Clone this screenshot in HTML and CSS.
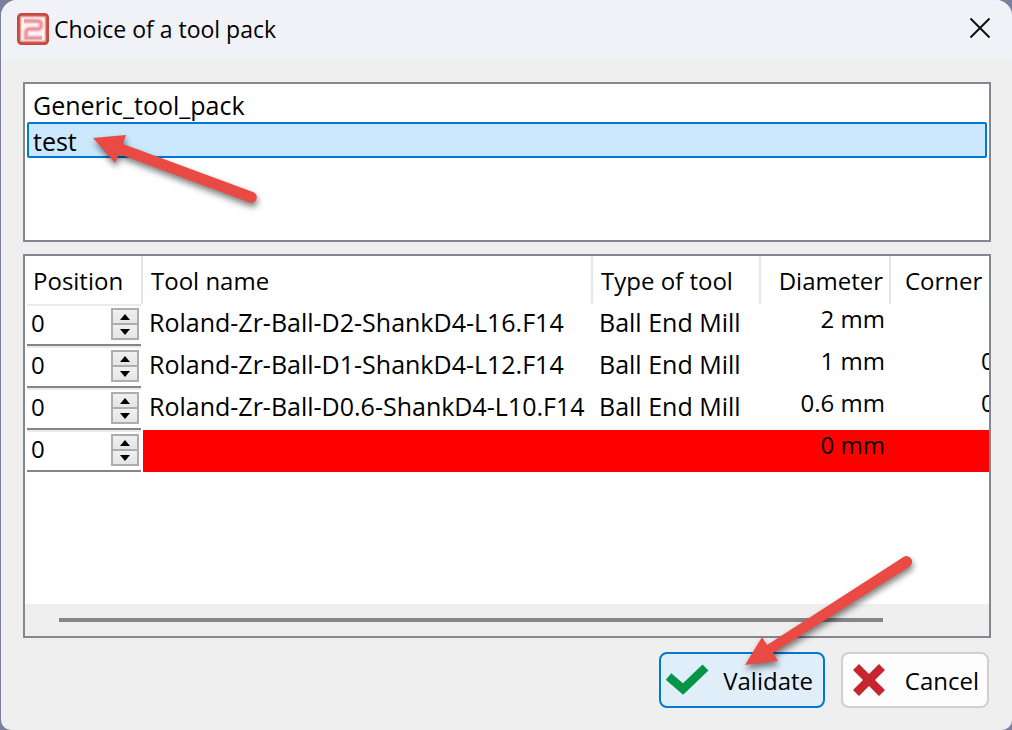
FILE: index.html
```html
<!DOCTYPE html>
<html lang="en">
<head>
  <meta charset="UTF-8">
  <meta name="viewport" content="width=device-width, initial-scale=1.0">
  <title>Choice of a tool pack</title>
  <link rel="stylesheet" href="styles.css">
</head>
<body>
  <div class="dialog">
    <header class="title-bar">
      <svg class="app-icon" width="32" height="32" viewBox="0 0 32 32" aria-hidden="true">
        <rect x="1.5" y="1.5" width="29" height="29" rx="3" fill="#fdf3f3" stroke="#c9493f" stroke-width="3"/>
        <rect x="3.5" y="3.5" width="25" height="25" rx="2" fill="none" stroke="#e39b95" stroke-width="1.500"/>
        <path d="M7 8H20Q24 8 24 11V13Q24 16 20 16H13Q9 16 9 20V25H25" fill="none" stroke="#f9d3d8" stroke-width="6"/>
        <path d="M7 8H20Q24 8 24 11V13Q24 16 20 16H13Q9 16 9 20V25H25" fill="none" stroke="#ee93a2" stroke-width="3"/>
      </svg>
      <h1 class="title">Choice of a tool pack</h1>
      <button class="close-button" type="button" aria-label="Close">
        <svg width="20" height="20" viewBox="0 0 20 20"><path d="M0.5 0.5L19.5 19.5M19.5 0.5L0.5 19.5" stroke="#111" stroke-width="2"/></svg>
      </button>
    </header>

    <form class="content">
      <!-- Tool packs -->
      <select class="pack-list" size="4" aria-label="Tool packs">
        <option>Generic_tool_pack</option>
        <option selected>test</option>
      </select>

      <!-- Tools of the selected pack -->
      <div class="tool-panel">
        <div class="tool-view">
          <table class="tool-table">
            <colgroup>
              <col class="col-position">
              <col class="col-name">
              <col class="col-type">
              <col class="col-diameter">
              <col class="col-corner">
            </colgroup>
            <thead>
              <tr>
                <th>Position</th>
                <th>Tool name</th>
                <th>Type of tool</th>
                <th class="number">Diameter</th>
                <th class="corner">Corner</th>
              </tr>
            </thead>
            <tbody>
              <tr>
                <td class="position">
                  <div class="spinner">
                    <input type="number" value="0" aria-label="Position of tool 1">
                    <div class="spin-buttons">
                      <button class="up" type="button" aria-label="Increase"></button>
                      <button class="down" type="button" aria-label="Decrease"></button>
                    </div>
                  </div>
                </td>
                <td>Roland-Zr-Ball-D2-ShankD4-L16.F14</td>
                <td>Ball End Mill</td>
                <td class="number">2 mm</td>
                <td class="radius"></td>
              </tr>
              <tr>
                <td class="position">
                  <div class="spinner">
                    <input type="number" value="0" aria-label="Position of tool 2">
                    <div class="spin-buttons">
                      <button class="up" type="button" aria-label="Increase"></button>
                      <button class="down" type="button" aria-label="Decrease"></button>
                    </div>
                  </div>
                </td>
                <td>Roland-Zr-Ball-D1-ShankD4-L12.F14</td>
                <td>Ball End Mill</td>
                <td class="number">1 mm</td>
                <td class="radius">0</td>
              </tr>
              <tr>
                <td class="position">
                  <div class="spinner">
                    <input type="number" value="0" aria-label="Position of tool 3">
                    <div class="spin-buttons">
                      <button class="up" type="button" aria-label="Increase"></button>
                      <button class="down" type="button" aria-label="Decrease"></button>
                    </div>
                  </div>
                </td>
                <td>Roland-Zr-Ball-D0.6-ShankD4-L10.F14</td>
                <td>Ball End Mill</td>
                <td class="number">0.6 mm</td>
                <td class="radius">0</td>
              </tr>
              <tr class="invalid">
                <td class="position">
                  <div class="spinner">
                    <input type="number" value="0" aria-label="Position of tool 4">
                    <div class="spin-buttons">
                      <button class="up" type="button" aria-label="Increase"></button>
                      <button class="down" type="button" aria-label="Decrease"></button>
                    </div>
                  </div>
                </td>
                <td></td>
                <td></td>
                <td class="number">0 mm</td>
                <td class="radius"></td>
              </tr>
            </tbody>
          </table>
        </div>
        <div class="scroll-track"><div class="scroll-thumb"></div></div>
      </div>

      <!-- Actions -->
      <div class="actions">
        <button class="action-button validate" type="submit">
          <svg width="44" height="32" viewBox="0 0 44 32" aria-hidden="true"><path d="M2.500 12.500L17 25L39.500 3.500" fill="none" stroke="#069546" stroke-width="8.500"/></svg>
          <span>Validate</span>
        </button>
        <button class="action-button cancel" type="button">
          <svg width="32" height="32" viewBox="0 0 32 32" aria-hidden="true"><path d="M3 3L29 29M29 3L3 29" stroke="#c6262e" stroke-width="8.500"/></svg>
          <span>Cancel</span>
        </button>
      </div>
    </form>

    <svg class="arrow arrow-pack" width="180" height="84" viewBox="0 0 180 84" aria-hidden="true">
      <path d="M13 8L46 5L43 14L173 62A5.300 5.300 0 0 1 169.500 72.500L39 24L35 33Z" fill="#e94b44"/>
    </svg>
    <svg class="arrow arrow-validate" width="180" height="124" viewBox="0 0 180 124" aria-hidden="true">
      <path d="M5 115L22 87L27 95L163.500 7A5.500 5.500 0 0 1 169.500 16.500L33 103L38 111Z" fill="#e94b44"/>
    </svg>
  </div>
</body>
</html>
```
FILE: styles.css
```css
* {
  box-sizing: border-box;
}

body, html {
  margin: 0;
  padding: 0;
}

body {
  background-color: #7b7e9c;
  font-family: "Open Sans", "Noto Sans", sans-serif;
  font-size: 24px;
  color: #000;
}

button, input, select {
  font: inherit;
  color: inherit;
}

.dialog {
  position: relative;
  display: flex;
  flex-direction: column;
  min-height: 100vh;
  margin-left: 1px;
  background-color: #efefef;
  border-radius: 16px 16px 10px 10px;
  overflow: hidden;
}

/* Title bar */
.title-bar {
  display: flex;
  align-items: center;
  height: 60px;
  padding: 0 16px 2px;
  background-color: #f1f2f8;
}

.title {
  flex: 1;
  margin: 0 0 0 5px;
  font-size: 23px;
  font-weight: normal;
}

.close-button {
  display: flex;
  padding: 4px 6px 6px;
  background: none;
  border: none;
}

/* Content */
.content {
  flex: 1;
  display: flex;
  flex-direction: column;
  gap: 12px;
  padding: 22px 21px 22px 22px;
}

.pack-list {
  width: 100%;
  height: 160px;
  padding: 2px;
  background-color: #fff;
  border: 2px solid #828790;
  border-radius: 0;
  outline: none;
  overflow: hidden;
  font-size: 25px;
}

.pack-list option {
  height: 36px;
  min-height: 36px;
  padding: 0 4px;
  border: 2px solid transparent;
  line-height: 28px;
}

.pack-list option:checked {
  background: linear-gradient(#cce8ff, #cce8ff);
  border-color: #0078d7;
  border-radius: 2px;
  color: #000;
}

.tool-panel {
  flex: 1;
  display: flex;
  flex-direction: column;
  border: 2px solid #828790;
  background-color: #fff;
}

.tool-view {
  flex: 1;
  overflow: hidden;
}

.tool-table {
  width: 100%;
  table-layout: fixed;
  border-collapse: separate;
  border-spacing: 0;
  white-space: nowrap;
}

.col-position {
  width: 118px;
}

.col-name {
  width: 450px;
}

.col-type {
  width: 168px;
}

.col-diameter {
  width: 130px;
}

.tool-table th {
  height: 48px;
  padding: 0 6px 0 8px;
  border-right: 2px solid #e5e5e5;
  font-weight: normal;
  text-align: left;
}

.tool-table th.corner {
  padding: 0 0 0 14px;
  border-right: none;
}

.tool-table td {
  height: 42px;
  padding: 0 6px;
  font-size: 25px;
  line-height: 36px;
  vertical-align: top;
  overflow: hidden;
}

.tool-table .number {
  text-align: right;
}

.tool-table td.number,
.tool-table td.radius {
  font-size: 24px;
  line-height: 30px;
}

.tool-table td.radius {
  padding: 0 0 0 90px;
}

.tool-table td.position {
  padding: 0 2px;
  background-color: #fff;
}

.invalid {
  background-color: #f00;
}

.spinner {
  display: flex;
  align-items: center;
  justify-content: space-between;
  height: 42px;
  padding: 0 2px 2px 4px;
  border-top: 2px solid #ebebeb;
  border-bottom: 2px solid #858585;
}

.spinner input {
  width: 60px;
  height: 32px;
  padding: 0 0 2px;
  background: none;
  border: none;
  font-size: 24px;
  appearance: textfield;
}

.spinner input::-webkit-inner-spin-button {
  display: none;
}

.spin-buttons {
  display: flex;
  flex-direction: column;
  width: 28px;
  height: 32px;
  border: 2px solid #adadad;
}

.spin-buttons button {
  flex: 1;
  display: flex;
  align-items: center;
  justify-content: center;
  padding: 0;
  background: linear-gradient(#f0f0f0, #e5e5e5);
  border: none;
}

.spin-buttons .down {
  border-top: 2px solid #adadad;
}

.spin-buttons button::before {
  content: "";
  border: 5px solid transparent;
}

.spin-buttons .up::before {
  border-top: none;
  border-bottom: 6px solid #000;
}

.spin-buttons .down::before {
  border-bottom: none;
  border-top: 6px solid #000;
}

.scroll-track {
  height: 32px;
  padding: 14px 34px;
  background-color: #efefef;
}

.scroll-thumb {
  width: 92%;
  height: 4px;
  background-color: #858585;
}

/* Buttons */
.actions {
  display: flex;
  justify-content: flex-end;
  gap: 16px;
  padding: 2px 2px 0 0;
}

.action-button {
  display: flex;
  align-items: center;
  justify-content: space-between;
  height: 56px;
  padding: 0 10px;
  background-color: #fdfdfd;
  border: 2px solid #d0d0d0;
  border-radius: 8px;
}

.validate {
  width: 166px;
  padding-left: 5px;
  background-color: #e0eef9;
  border-color: #0078d7;
}

.cancel {
  width: 148px;
  padding-right: 8px;
}

/* Pointers drawn over the dialog */
.arrow {
  position: absolute;
  filter: drop-shadow(1px 4px 3px rgba(0, 0, 0, 0.5));
  pointer-events: none;
}

.arrow-pack {
  top: 130px;
  left: 79px;
}

.arrow-validate {
  top: 550px;
  right: 92px;
}
```
